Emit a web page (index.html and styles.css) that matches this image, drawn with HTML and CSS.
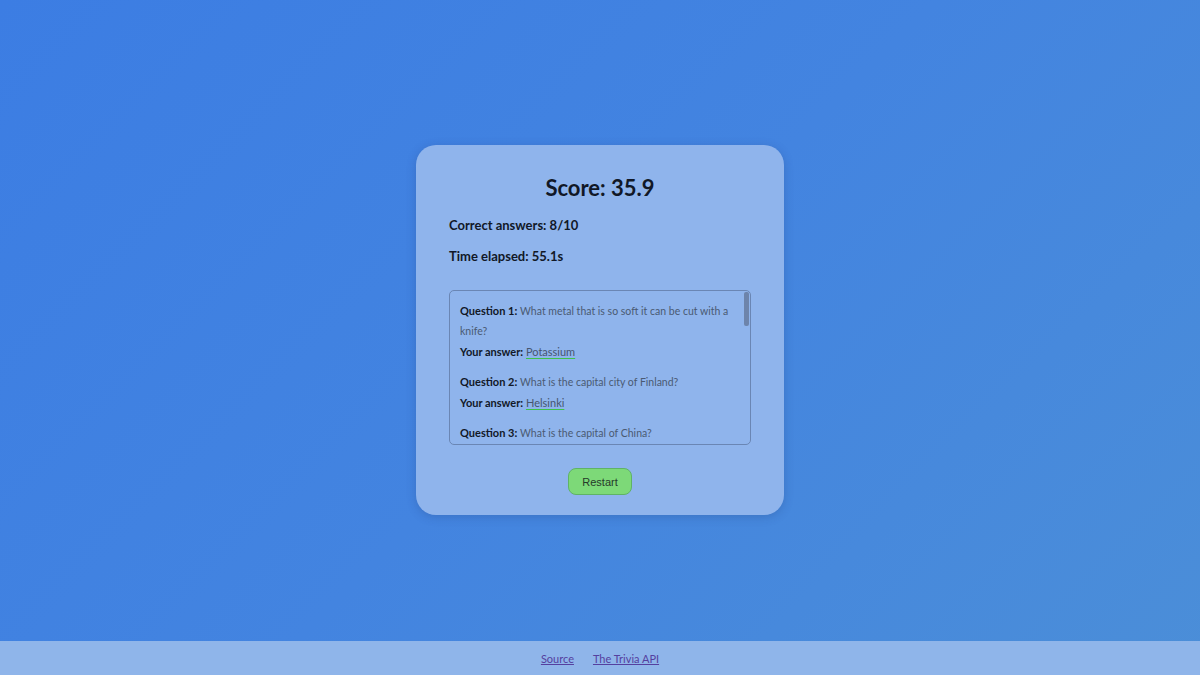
FILE: index.html
```html
<!DOCTYPE html>
<html lang="en">
<head>
<meta charset="utf-8">
<title>Trivia</title>
<link rel="stylesheet" href="styles.css">
</head>
<body>
<main class="main">
  <section class="card">
    <h2 class="score">Score: 35.9</h2>
    <p class="stat">Correct answers: 8/10</p>
    <p class="stat">Time elapsed: 55.1s</p>
    <div class="review-wrap">
      <div class="review">
        <div class="item">
          <p class="line"><b>Question 1:</b> <span class="q">What metal that is so soft it can be cut with a knife?</span></p>
          <p class="line answer"><b>Your answer:</b> <span class="ans">Potassium</span></p>
        </div>
        <div class="item">
          <p class="line"><b>Question 2:</b> <span class="q">What is the capital city of Finland?</span></p>
          <p class="line answer"><b>Your answer:</b> <span class="ans">Helsinki</span></p>
        </div>
        <div class="item">
          <p class="line"><b>Question 3:</b> <span class="q">What is the capital of China?</span></p>
          <p class="line answer"><b>Your answer:</b> <span class="ans">Beijing</span></p>
        </div>
        <div class="item">
          <p class="line"><b>Question 4:</b> <span class="q">Which planet is known as the Red Planet?</span></p>
          <p class="line answer"><b>Your answer:</b> <span class="ans">Mars</span></p>
        </div>
        <div class="item">
          <p class="line"><b>Question 5:</b> <span class="q">What is the largest ocean on Earth?</span></p>
          <p class="line answer"><b>Your answer:</b> <span class="ans">Pacific Ocean</span></p>
        </div>
      </div>
      <span class="thumb"></span>
    </div>
    <div class="actions"><button class="restart">Restart</button></div>
  </section>
</main>
<footer class="footer">
  <a href="#" class="link">Source</a>
  <a href="#" class="link">The Trivia API</a>
</footer>
</body>
</html>
```
FILE: styles.css
```css
html, body { margin: 0; padding: 0; height: 100%; }
body {
  font-family: Lato, "Noto Sans", sans-serif;
  background: linear-gradient(135deg, #3c7de3 0%, #4384e0 50%, #4b8ed8 100%);
  display: flex;
  flex-direction: column;
  min-height: 675px;
}
.main { flex: 1; display: flex; justify-content: center; align-items: flex-start; }
.card {
  margin-top: 145px;
  width: 368px;
  box-sizing: border-box;
  padding: 28px 33px 20px;
  background: #8fb4ec;
  border-radius: 20px;
  box-shadow: 0 2px 10px rgba(30, 60, 120, 0.25);
  color: #111827;
}
.score { margin: 0; text-align: center; font-size: 22px; line-height: 30px; font-weight: 700; }
.stat { margin: 14px 0 0; font-size: 13px; line-height: 16px; font-weight: 700; }
.stat + .stat { margin-top: 15px; }
.review-wrap { position: relative; margin-top: 26px; }
.review {
  height: 153px;
  overflow-y: scroll;
  scrollbar-width: none;
  border: 1px solid #6a86b4;
  border-radius: 5px;
  padding: 0 10px;
}
.review::-webkit-scrollbar { display: none; }
.thumb {
  position: absolute;
  right: 2px;
  top: 2px;
  width: 5px;
  height: 34px;
  border-radius: 2px;
  background: #6d84ab;
}
.item { margin-top: 10px; }
.item:last-child { margin-bottom: 10px; }
.line { margin: 0; font-size: 11px; line-height: 20px; color: #465670; }
.answer { margin-top: 1px; }
.line b { color: #111827; font-weight: 700; }
.q { font-size: 10.5px; color: #4a5a72; }
.ans { text-decoration: underline; text-decoration-color: #3ec24a; text-underline-offset: 2px; }
.actions { display: flex; justify-content: center; margin-top: 23px; }
.restart {
  width: 64px; height: 27px;
  background: #7dd978;
  border: 1px solid #5fb366;
  border-radius: 8px;
  font-family: "Liberation Sans", Arial, sans-serif;
  font-size: 11px;
  color: #263a2a;
  padding: 0;
}
.footer {
  height: 34px;
  background: #8fb5ea;
  display: flex;
  justify-content: center;
  align-items: center;
  gap: 19px;
}
.link { color: #55409f; font-size: 11px; }
```
